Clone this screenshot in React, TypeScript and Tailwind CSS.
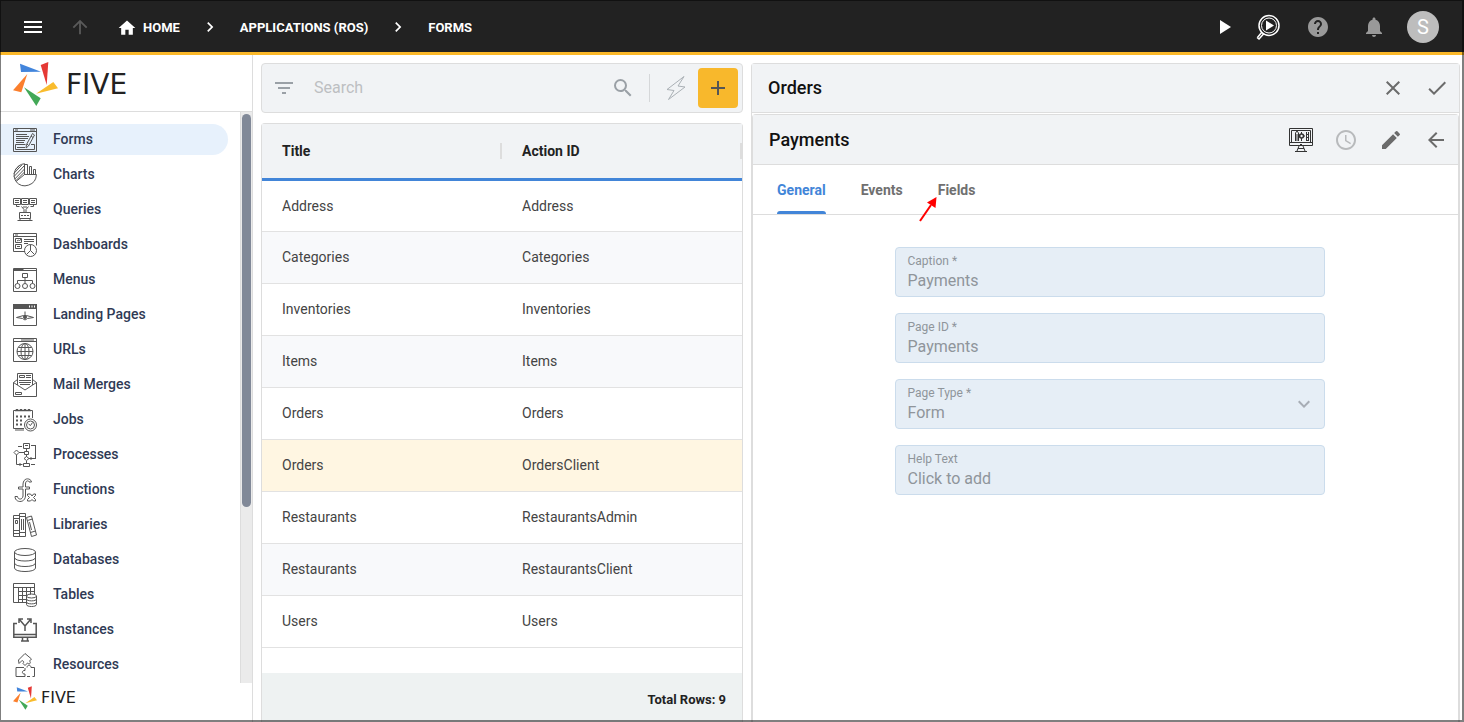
import type { ReactNode } from "react";
import {
  MdAccessTime,
  MdAdd,
  MdArrowBack,
  MdArrowUpward,
  MdCheck,
  MdChevronRight,
  MdClose,
  MdCreate,
  MdExpandMore,
  MdFilterList,
  MdHelp,
  MdHome,
  MdMenu,
  MdNotifications,
  MdPlayArrow,
  MdSearch,
} from "react-icons/md";

const menuItems: { name: string; icon: ReactNode }[] = [
  {
    name: "Forms",
    icon: (
      <>
        <path d="M.5.5h23v23H.5zM.5 3.5h23M2 2h3M17 2h5" />
        <path d="M3 6.5h11M3 8.5h13M3 10.5h12M3 12.5h9M3 14.5h8" />
        <path d="M2.5 16.5h10M18 16.5h3.5v5h-19v-5M4 19.5h8" />
        <path d="M19.5 5.5l2 1.5-6 11-2.5 2 .5-3.5zM18 8l2 1.5M14 16l1.5 1.5" />
      </>
    ),
  },
  {
    name: "Charts",
    icon: (
      <>
        <path d="M11.5.7A11.5 11.5 0 0 0 3 18.5l8.5-7zM3 18.5A11.5 11.5 0 0 0 23.4 11.5H11.5" />
        <path d="M.8 10.5l8-8.5M1 13.5L11.5 2.5M1.8 16L11.5 6M3 17.5L11.5 9M2 7l4-4" />
        <path d="M11.5 11.5v-10h3v10M16.5 11.5v-8h2v8M20.5 11.5v-5h2v5" />
      </>
    ),
  },
  {
    name: "Queries",
    icon: (
      <>
        <path d="M.5.5h7v6h-7zM8.5.5h7v6h-7zM16.5.5h7v6h-7z" />
        <path d="M2 2.5h4M2 4.5h4M10 2.5h4M10 4.5h4M18 2.5h4M18 4.5h4" />
        <path d="M3.5 7v1.5h3M20.5 7v1.5h-3M8.5 8.5l2.5 3v3h2v-3l2.5-3M10 9h4" />
        <path d="M6.5 14.5h11v6h-11zM4.5 22.5h15M8 17.5h2M11 17.5h2M14 17.5h2M7 20.5v2M17 20.5v2" />
      </>
    ),
  },
  {
    name: "Dashboards",
    icon: (
      <>
        <path d="M12 18.5H.5V.5h23v12M.5 3.5h23M2 2h3" />
        <path d="M2.5 5.5h6v4h-6zM2.5 11.5h6v4h-6zM4 8l1.5-1 1 1L8 6M4 13.5h3" />
        <path d="M11 6.5h10M11 8.5h10M11 10.5h4" />
        <circle cx="17.5" cy="17.5" r="6" />
        <path d="M17.5 11.5v6l-4 4M17.5 17.5l4 4" />
      </>
    ),
  },
  {
    name: "Menus",
    icon: (
      <>
        <path d="M.5.5h23v23H.5zM.5 2.5h23M.5 1.5h10" />
        <path d="M9.5 5.5h5v4h-5zM12 9.5v6M4.5 15.5v-3h15v3" />
        <circle cx="4.5" cy="18" r="2.5" />
        <circle cx="12" cy="18" r="2.5" />
        <circle cx="19.5" cy="18" r="2.5" />
      </>
    ),
  },
  {
    name: "Landing Pages",
    icon: (
      <>
        <path d="M.5 1.5h23v21H.5z" />
        <path d="M0 1h24v5H0z" fill="#555" stroke="none" />
        <path d="M16 3.5h1M18.5 3.5h1M21 3.5h1" stroke="#fff" strokeWidth="2" />
        <path d="M12 8.5v5M3.5 14.5l7-2h3l7 2-6 1-2.5 1.5-2.5-1.5z" />
        <circle cx="12" cy="14" r="1.5" fill="#555" />
      </>
    ),
  },
  {
    name: "URLs",
    icon: (
      <>
        <path d="M.5.5h23v23H.5zM.5 3.5h23M8 2h13" />
        <circle cx="12" cy="13.5" r="8" />
        <ellipse cx="12" cy="13.5" rx="4" ry="8" />
        <path d="M12 5.5v16M4 13.5h16M5.5 9.5h13M5.5 17.5h13" />
      </>
    ),
  },
  {
    name: "Mail Merges",
    icon: (
      <>
        <path d="M4.500 12V.5h15V12M6.5 2.5h5v2h-5zM13 2.500h5M13 4.5h5M6 7.5h12M6 9.5h12M7 11.5h10" />
        <path d="M4.5 6.5l-4 3v14h23v-14l-4-3M.5 9.5L12 17l11.5-7.5M2.5 19.5h6v2h-6z" />
      </>
    ),
  },
  {
    name: "Jobs",
    icon: (
      <>
        <path d="M11 20.5H.5v-18h19V10M2 22h9" />
        <path d="M3 3.5v-2h2v2M7 3.5v-2h2v2M11 3.5v-2h2v2M15 3.5v-2h2v2" />
        <path d="M3 8.5h2M7 8.5h2M11 8.5h2M15 8.5h2M3 12.5h2M7 12.5h2M3 16.5h2M7 16.5h2" strokeWidth="2" />
        <circle cx="17.5" cy="17" r="6" />
        <circle cx="17.5" cy="17" r="4" />
        <path d="M15.5 16l2 1.5 2-3" />
      </>
    ),
  },
  {
    name: "Processes",
    icon: (
      <>
        <path d="M10.5.5h6v5h-6zM12 2.5h3M5 3.5h4M18 2.5h5M22.5 2.5v13M13.5 6v3" />
        <path d="M11.5 8.5h4v3h-4zM13.5 12v2M3.5 7L6 9.5 3.5 12 1 9.5zM6 9.5h5M3.5 12v9.5h6" />
        <path d="M13.5 13.5l2.5 2-2.5 2-2.5-2zM16 15.500h7M18 14v3M13.5 18v3M10.5 20.5h6v3h-6zM18 21.5h4M7 20v3" />
      </>
    ),
  },
  {
    name: "Functions",
    icon: (
      <>
        <path d="M18.5 4c-.5-4-8-5-8.5 2v3H5.5v2H10v7c-.5 4-5 4-5.5.5H2c0 6.500 10 7 10.5-.5v-7h4V9h-4V6c0-4 3.5-3.5 3.5-2z" />
        <path d="M14.500 16h3l1.5 2 1.5-2h2v1.5l-2 2 2 2V23h-2L19 21.5 17.5 23h-3v-1.5l2-2-2-2z" />
      </>
    ),
  },
  {
    name: "Libraries",
    icon: (
      <>
        <path d="M.5 2.5h6v21h-6zM.5 5.5h6M2.5 7.5h2v3h-2zM.5 17.5h6M.5 20.5h6" />
        <path d="M6.5.5h6v23h-6zM6.5 3.5h6M8.5 6v11M10.5 6v11M6.5 19.5h6" />
        <path d="M13.5 4.5l5-1.5 5 19-5 1.5zM14.5 7.5l5-1.5M17.5 19.5l5-1.5M16.5 9l2 8" />
      </>
    ),
  },
  {
    name: "Databases",
    icon: (
      <>
        <ellipse cx="12" cy="4" rx="10.5" ry="3.5" />
        <path d="M1.5 4v16c0 4.700 21 4.700 21 0V4M1.5 9.5c0 4.700 21 4.700 21 0M1.5 15c0 4.700 21 4.700 21 0" />
      </>
    ),
  },
  {
    name: "Tables",
    icon: (
      <>
        <path d="M13 19.5H.5V.5h21V11M.5 4.5h21M5.5 4.5v15M9.5 4.5v15M13.5 4.5v15M17.5 4.5v7M5.5 8.5h16M5.5 12.5h9M5.5 16.5h8" />
        <ellipse cx="18.5" cy="13" rx="5" ry="2" />
        <path d="M13.5 13v8.5c0 2.700 10 2.700 10 0V13M13.5 16c0 2.500 10 2.500 10 0M13.5 19c0 2.500 10 2.500 10 0" />
      </>
    ),
  },
  {
    name: "Instances",
    icon: (
      <>
        <path d="M4 5.5H.8v13.700h22.400V5.500H20M1 16.500h22M9.5 19.500v3M14.500 19.500v3M8 23h8" strokeWidth="1.5" />
        <path d="M12 13V8L6.5 1.5M12 8l5.5-6.5M6 5V1h4M14 1h4v4" strokeWidth="1.5" />
      </>
    ),
  },
  {
    name: "Resources",
    icon: (
      <>
        <path d="M12 .5l6.5 5.500-2 2c2 2 0 4-2 2l-2.500 2.500-2-2c2-2-1-4-2-2l-2 2L5.500 7z" />
        <path d="M3 14.500h8M3 14.500v9h9v-2.500c-3.500.5-3.500-4 0-3.500v-2.500M14 14.500c0-3 4-3 4 0h3.500v9h-2M14 23.500h3" />
      </>
    ),
  },
];

const rows = [
  { title: "Address", actionId: "Address" },
  { title: "Categories", actionId: "Categories" },
  { title: "Inventories", actionId: "Inventories" },
  { title: "Items", actionId: "Items" },
  { title: "Orders", actionId: "Orders" },
  { title: "Orders", actionId: "OrdersClient", selected: true },
  { title: "Restaurants", actionId: "RestaurantsAdmin" },
  { title: "Restaurants", actionId: "RestaurantsClient" },
  { title: "Users", actionId: "Users" },
];

const tabs = ["General", "Events", "Fields"];

const Pinwheel = ({ className }: { className: string }) => (
  <svg viewBox="0 0 45 44" className={className} aria-hidden="true">
    <path d="M7 1.700L28 9.700 8 10z" fill="#4285dc" />
    <path d="M27.700 3L35.300 0 33.700 23z" fill="#e53935" />
    <path d="M40.300 20L45 26.300 23 31.700z" fill="#f9bc2d" />
    <path d="M11 25.300L27.700 36.300 23.300 44z" fill="#43a857" />
    <path d="M14.300 12L8.300 30.300 0 28.300z" fill="#fb7f2d" />
  </svg>
);

const Header = () => {
  return (
    <header className="flex h-[55px] shrink-0 items-center justify-between border-b-3 border-[#fbb829] bg-[#222] pt-0.5 pr-[25px] pl-[21px] text-white">
      <nav className="flex items-center text-[13px] font-bold">
        <button aria-label="Menu">
          <MdMenu size={24} />
        </button>
        <button aria-label="Up" className="ml-6 text-[#5a5a5a]">
          <MdArrowUpward size={22} />
        </button>
        <a href="#home" className="ml-[26px] flex items-center gap-1.5 pt-0.5">
          <MdHome size={20} />
          HOME
        </a>
        <MdChevronRight size={20} className="mx-5" />
        <a href="#applications" className="pt-0.5">
          APPLICATIONS (ROS)
        </a>
        <MdChevronRight size={20} className="mx-5" />
        <a href="#forms" className="pt-0.5">
          FORMS
        </a>
      </nav>
      <div className="flex items-center">
        <button aria-label="Run">
          <MdPlayArrow size={24} />
        </button>
        <button aria-label="Inspect" className="ml-5">
          <svg width="24" height="26" viewBox="0 0 24 26" fill="none" stroke="#fff">
            <circle cx="13" cy="11.5" r="10" strokeWidth="1.5" />
            <circle cx="13" cy="11.5" r="7.5" />
            <path d="M6 18l-4.500 5.5M8 19.5L3 25l-2-1.5" strokeWidth="1.5" />
            <path d="M10 6.5l8 5-8 5z" fill="#fff" stroke="none" />
          </svg>
        </button>
        <button aria-label="Help" className="ml-[26px] text-[#999]">
          <MdHelp size={24} />
        </button>
        <button aria-label="Notifications" className="ml-8 text-[#999]">
          <MdNotifications size={24} />
        </button>
        <button className="ml-[21px] size-8 rounded-full bg-[#bdbdbd] text-xl">S</button>
      </div>
    </header>
  );
};

const Sidebar = () => {
  return (
    <aside className="flex w-[253px] shrink-0 flex-col border-r border-[#ddd]">
      <div className="flex h-[57px] shrink-0 items-center gap-2 border-b border-[#ddd] pt-0.5 pl-[13px]">
        <Pinwheel className="h-11 w-[45px]" />
        <span className="pt-0.5 font-['DejaVu_Sans'] text-[28px] leading-none text-[#222]">FIVE</span>
      </div>
      <div className="flex min-h-0 flex-1">
        <nav className="flex flex-1 flex-col gap-1 overflow-hidden pt-3 pr-3">
          {menuItems.map(({ name, icon }, index) => (
            <a
              key={name}
              href={`#${name}`}
              className={`flex h-[31px] shrink-0 items-center gap-4 rounded-r-full pl-[13px] text-sm font-medium text-[#2f3a55] ${
                index === 0 ? "bg-[#e7f1fc]" : ""
              }`}
            >
              <svg width="24" height="24" viewBox="0 0 24 24" fill="none" stroke="#555" aria-hidden="true">
                {icon}
              </svg>
              <span className="pb-0.5">{name}</span>
            </a>
          ))}
        </nav>
        <div className="w-3 border-l border-[#ddd] bg-[#ebebeb] px-px pt-0.5">
          <div className="h-[69%] rounded-full bg-[#818998]" />
        </div>
      </div>
      <div className="flex h-[39px] shrink-0 items-start gap-1 pt-[3px] pl-[13px]">
        <Pinwheel className="h-6 w-6" />
        <span className="font-['DejaVu_Sans'] text-base text-[#222]">FIVE</span>
      </div>
    </aside>
  );
};

const FormList = () => {
  return (
    <section className="flex min-w-0 flex-col gap-2.5">
      <div className="flex h-[50px] shrink-0 items-center rounded border border-[#ddd] bg-[#f1f3f5] pr-1 pl-2.5">
        <button aria-label="Filter" className="text-[#9aa0a6]">
          <MdFilterList size={24} />
        </button>
        <input
          type="search"
          aria-label="Search"
          placeholder="Search"
          className="ml-[18px] min-w-0 flex-1 bg-transparent text-base outline-none placeholder:text-[#bdbfc2]"
        />
        <button aria-label="Search forms" className="text-[#9aa0a6]">
          <MdSearch size={24} />
        </button>
        <div className="mr-4 ml-3.5 h-7 w-px bg-[#d5d7d9]" />
        <button aria-label="Quick actions">
          <svg width="20" height="24" viewBox="0 0 20 24" fill="none" stroke="#aab0b5">
            <path d="M18 .5L1 13.5l7 1-5.5 9L19 11l-7-1z" strokeLinejoin="round" />
          </svg>
        </button>
        <button aria-label="Add" className="ml-3 flex size-10 items-center justify-center rounded bg-[#f8b82c] text-[#555]">
          <MdAdd size={24} />
        </button>
      </div>

      <div className="flex min-h-0 flex-1 flex-col rounded-t border border-b-0 border-[#ddd]">
        <table className="w-full table-fixed text-left text-sm">
          <thead>
            <tr className="h-[55px] border-b-3 border-[#4285d8] bg-[#f1f3f5] text-[#222]">
              {["Title", "Action ID"].map((heading) => (
                <th key={heading} className="pl-5 font-bold">
                  <div className="flex h-4 items-center justify-between border-r-2 border-[#ddd]">{heading}</div>
                </th>
              ))}
            </tr>
          </thead>
          <tbody>
            {rows.map(({ title, actionId, selected }) => (
              <tr
                key={actionId}
                className={`h-[52px] border-b border-[#e2e2e2] text-[#444] ${
                  selected ? "bg-[#fff6e2]" : "even:bg-[#f8f9fb]"
                }`}
              >
                <td className="pl-5">{title}</td>
                <td className="pl-5">{actionId}</td>
              </tr>
            ))}
          </tbody>
        </table>
        <div className="mt-auto flex h-[49px] items-center justify-end bg-[#eef2f2] pt-1 pr-4 text-[13px] font-bold text-[#222]">
          Total Rows: 9
        </div>
      </div>
    </section>
  );
};

const Field = ({ id, label, value }: { id: string; label: string; value: string }) => (
  <div className="flex h-[50px] flex-col rounded border border-[#cbdcec] bg-[#e6eef6] px-3 pt-1 text-[#8f959b]">
    <label htmlFor={id} className="text-xs leading-[18px]">
      {label}
    </label>
    <input id={id} readOnly value={value} className="h-[22px] bg-transparent text-base leading-[22px] outline-none" />
  </div>
);

const PaymentsPage = () => {
  return (
    <section className="flex min-w-0 flex-col rounded-t border border-b-0 border-[#ddd]">
      <div className="flex h-[49px] shrink-0 items-center justify-between border-b border-[#ddd] bg-[#f1f3f5] pr-2.5 pl-4">
        <h1 className="text-lg font-medium text-[#111]">Orders</h1>
        <div className="flex gap-5 text-[#6b6b6b]">
          <button aria-label="Cancel">
            <MdClose size={24} />
          </button>
          <button aria-label="Save">
            <MdCheck size={24} />
          </button>
        </div>
      </div>

      <div className="mt-px flex flex-1 flex-col rounded-t border border-b-0 border-[#ddd]">
        <div className="flex h-[50px] shrink-0 items-center justify-between border-b border-[#ddd] bg-[#f1f3f5] pr-2.5 pl-4">
          <h2 className="text-lg font-medium text-[#111]">Payments</h2>
          <div className="flex gap-[21px] text-[#6b6b6b]">
            <button aria-label="Preview">
              <svg width="24" height="24" viewBox="0 0 24 24" fill="none" stroke="#333">
                <path d="M.5.5h23v17H.5zM.5 14.5h23M2.5 2.5h19v12h-19zM10 18l-2 5M14 18l2 5M6 23.5h12M9 20.5h6" />
                <path d="M11 16.5h2M6.5 13V5L8 3l1.5 2v8M8 6v7M12.5 4v2M12.5 10v3M9.500 8h2M14 8h2M17.5 4v9M19.5 4v9M17 6.5h3M17 9.5h3M17 12.500h3" />
                <circle cx="12.5" cy="8" r="2" strokeWidth="1.5" />
              </svg>
            </button>
            <button aria-label="History" className="text-[#b8babc]">
              <MdAccessTime size={24} />
            </button>
            <button aria-label="Edit">
              <MdCreate size={24} />
            </button>
            <button aria-label="Back">
              <MdArrowBack size={24} />
            </button>
          </div>
        </div>

        <div role="tablist" className="flex h-[50px] shrink-0 gap-[35px] border-b border-[#ddd] px-6 text-sm font-bold">
          {tabs.map((tab, index) => (
            <button
              key={tab}
              role="tab"
              aria-selected={index === 0}
              className={`relative ${index === 0 ? "text-[#4285d8]" : "text-[#707070]"}`}
            >
              {tab}
              {index === 0 && <span className="absolute inset-x-0 bottom-0 h-[3px] rounded-t bg-[#4285d8]" />}
              {tab === "Fields" && (
                <svg width="20" height="26" viewBox="0 0 20 26" className="absolute top-[31px] -left-5">
                  <path d="M2 25L13 9" stroke="#f00" strokeWidth="2" />
                  <path d="M18.5 1L17.5 12 9 6.5z" fill="#f00" />
                </svg>
              )}
            </button>
          ))}
        </div>

        <form className="ml-2 flex w-full max-w-[430px] flex-col gap-4 self-center pt-8">
          <Field id="caption" label="Caption *" value="Payments" />
          <Field id="page-id" label="Page ID *" value="Payments" />
          <div className="relative flex h-[50px] flex-col rounded border border-[#cbdcec] bg-[#e6eef6] px-3 pt-1 text-[#8f959b]">
            <label htmlFor="page-type" className="text-xs leading-[18px]">
              Page Type *
            </label>
            <select id="page-type" className="h-[22px] appearance-none bg-transparent text-base leading-[22px] outline-none">
              <option>Form</option>
            </select>
            <MdExpandMore size={24} className="pointer-events-none absolute top-3 right-2 text-[#a7adb5]" />
          </div>
          <Field id="help-text" label="Help Text" value="Click to add" />
        </form>
      </div>
    </section>
  );
};

const App = () => {
  return (
    <div className="relative flex h-screen flex-col overflow-hidden bg-white font-[Roboto,sans-serif]">
      <Header />
      <div className="flex min-h-0 flex-1">
        <Sidebar />
        <main className="grid min-w-0 flex-1 grid-cols-[17fr_25fr] gap-2 pt-2 pr-1 pl-2">
          <FormList />
          <PaymentsPage />
        </main>
      </div>
      <div className="pointer-events-none absolute inset-0 border-t border-r-2 border-b-2 border-l border-black/50" />
    </div>
  );
};

export default App;
